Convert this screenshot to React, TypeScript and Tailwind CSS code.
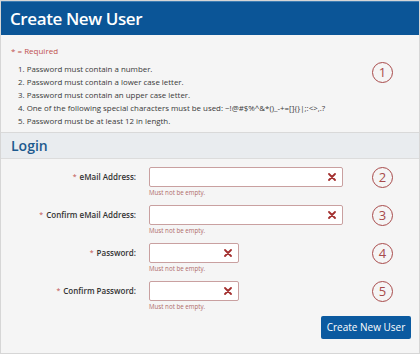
import React from 'react';

const rules = [
  'Password must contain a number.',
  'Password must contain a lower case letter.',
  'Password must contain an upper case letter.',
  'One of the following special characters must be used: ~!@#$%^&*()_-+=[]{}|;:<>,.?',
  'Password must be at least 12 in length.',
];

const fields = [
  { label: 'eMail Address:', wide: true, n: 2 },
  { label: 'Confirm eMail Address:', wide: true, n: 3 },
  { label: 'Password:', wide: false, n: 4 },
  { label: 'Confirm Password:', wide: false, n: 5 },
];

const Marker: React.FC<{ n: number }> = ({ n }) => (
  <div className="w-[21px] h-[21px] rounded-full border border-[#a84a4a] flex items-center justify-center text-[13px] leading-none text-[#a84a4a]">
    {n}
  </div>
);

const CrossIcon = () => (
  <svg width="8" height="8" viewBox="0 0 8 8">
    <path d="M1 1 L7 7 M7 1 L1 7" stroke="#a3302f" strokeWidth="1.8" strokeLinecap="round" />
  </svg>
);

const App: React.FC = () => {
  return (
    <div className="w-[420px] h-[356px] bg-white font-['Open_Sans',sans-serif] text-[#333]">
      <div className="h-[354px] border border-[#d6d6d6] bg-[#f5f5f5] flex flex-col">
        {/* page title */}
        <div className="h-[34px] bg-[#0b5597] border-t border-[#3f7db3] px-[9px] flex items-center">
          <h1 className="text-[17px] font-semibold tracking-[-0.4px] text-white leading-none">Create New User</h1>
        </div>

        {/* rules */}
        <div className="px-[10px] pt-[10px] border-b border-[#d9d9d9] h-[98px]">
          <div className="text-[8px] text-[#c0504d] leading-[12px]">* = Required</div>
          <div className="flex mt-[6px]">
            <ol className="flex-1 pl-[7px] text-[7.9px] leading-[13px] text-[#3a3a3a]">
              {rules.map((r, i) => (
                <li key={i}>
                  {i + 1}. {r}
                </li>
              ))}
            </ol>
            <div className="mr-[16px] -mt-[1px]">
              <Marker n={1} />
            </div>
          </div>
        </div>

        {/* section title */}
        <div className="h-[26px] bg-[#e9ecef] border-b border-[#dcdcdc] px-[10px] flex items-center">
          <h2 className="text-[14px] font-semibold text-[#1d5a8e] leading-none">Login</h2>
        </div>

        {/* form */}
        <div className="pt-[8px] flex flex-col gap-[8px]">
          {fields.map((f) => (
            <div key={f.n} className="flex items-start h-[30px]">
              <label className="w-[135px] h-[20px] flex items-center justify-end text-[8px] font-semibold text-[#333]">
                <span className="text-[#c0504d] font-normal text-[7px] mr-[3px]">*</span>
                {f.label}
              </label>
              <div className="ml-[13px] flex flex-col">
                <div
                  className={`${f.wide ? 'w-[194px]' : 'w-[90px]'} h-[20px] bg-white border border-[#c9a0a0] rounded-[2px] flex items-center justify-end pr-[6px]`}
                >
                  <CrossIcon />
                </div>
                <span className="text-[6.2px] text-[#b06a6a] leading-[10px] mt-[1px]">Must not be empty.</span>
              </div>
              <div className="ml-auto mr-[26px]">
                <Marker n={f.n} />
              </div>
            </div>
          ))}
        </div>

        <div className="flex justify-end pr-[8px] mt-[5px]">
          <button className="w-[90px] h-[23px] bg-[#0b5aa0] rounded-[2px] text-white text-[10px]">
            Create New User
          </button>
        </div>
      </div>
    </div>
  );
};

export default App;
